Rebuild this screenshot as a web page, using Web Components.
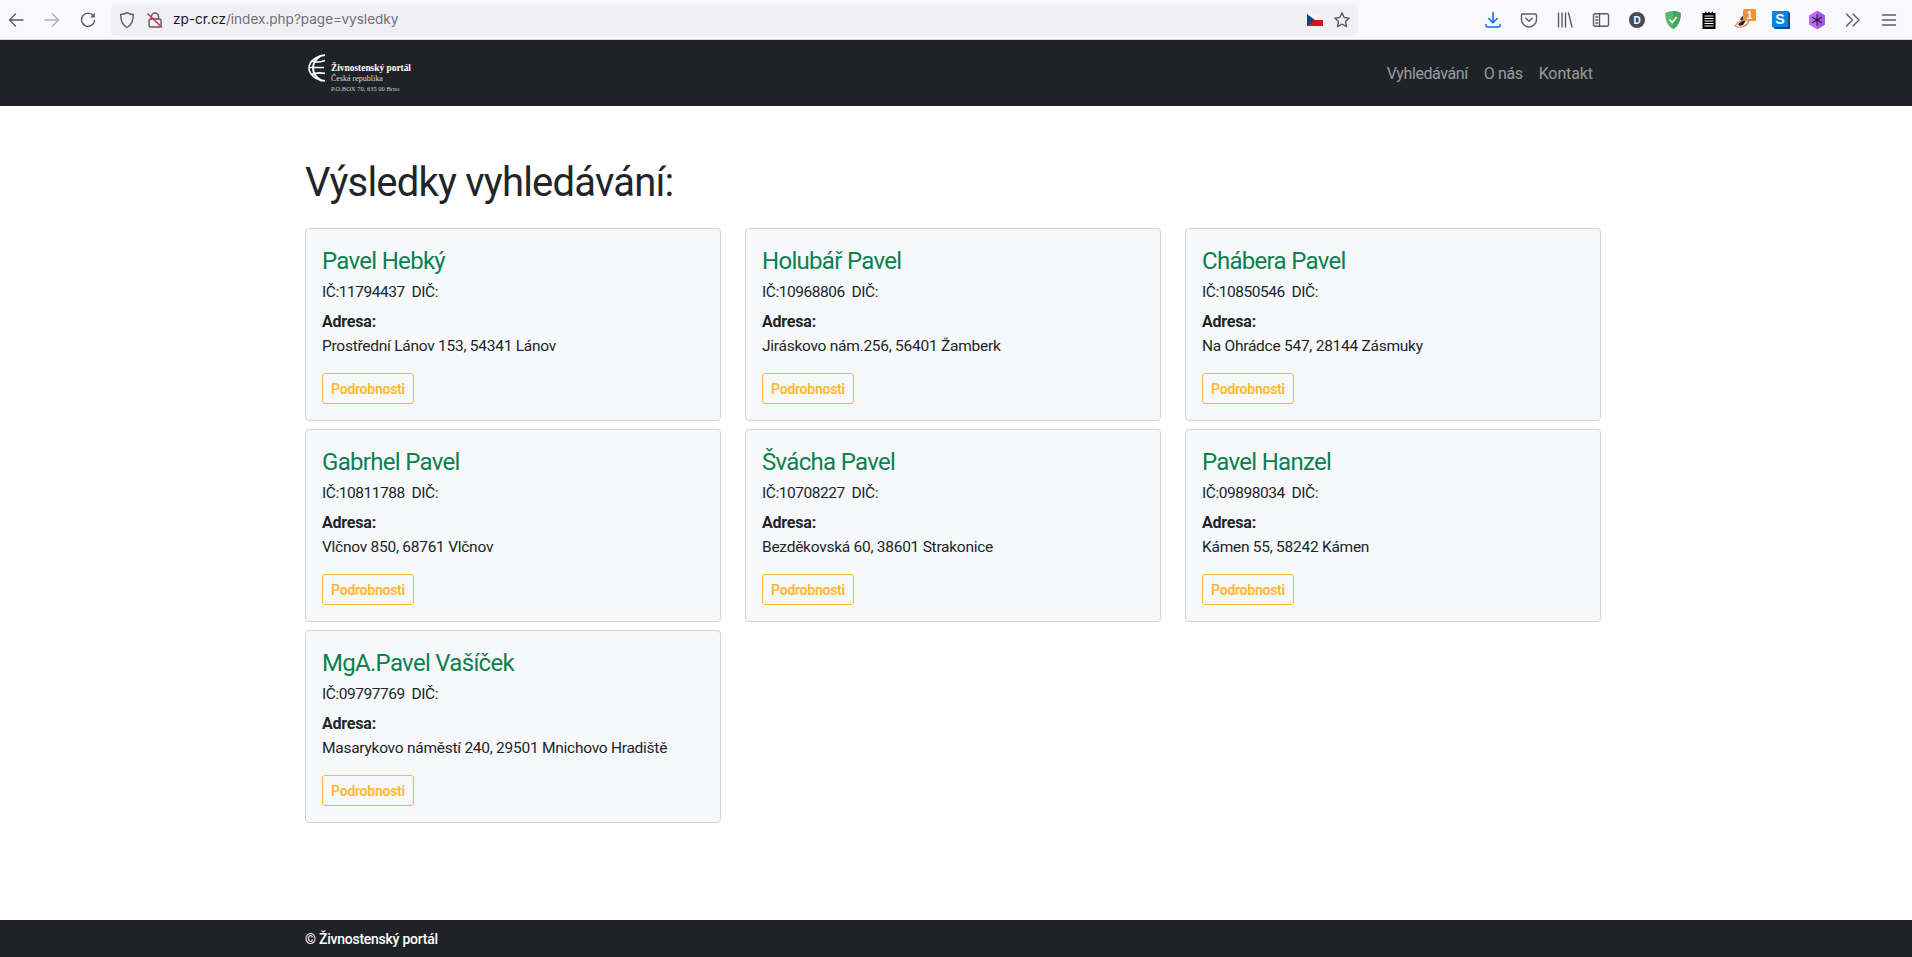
<!DOCTYPE html>
<html lang="cs"><head><meta charset="utf-8"><title>Živnostenský portál</title>
<style>
html,body{margin:0;padding:0;background:#fff}
body{font-family:Roboto,"Liberation Sans",sans-serif;color:#212529;font-size:16px;height:957px;overflow:hidden;display:flex;flex-direction:column}
results-page{flex:1}
</style></head><body>
<browser-bar></browser-bar>
<site-nav></site-nav>
<results-page>
<result-card name="Pavel Hebký" ic="11794437" addr="Prostřední Lánov 153, 54341 Lánov"></result-card>
<result-card name="Holubář Pavel" ic="10968806" addr="Jiráskovo nám.256, 56401 Žamberk"></result-card>
<result-card name="Chábera Pavel" ic="10850546" addr="Na Ohrádce 547, 28144 Zásmuky"></result-card>
<result-card name="Gabrhel Pavel" ic="10811788" addr="Vlčnov 850, 68761 Vlčnov"></result-card>
<result-card name="Švácha Pavel" ic="10708227" addr="Bezděkovská 60, 38601 Strakonice"></result-card>
<result-card name="Pavel Hanzel" ic="09898034" addr="Kámen 55, 58242 Kámen"></result-card>
<result-card name="MgA.Pavel Vašíček" ic="09797769" addr="Masarykovo náměstí 240, 29501 Mnichovo Hradiště"></result-card>
</results-page>
<site-footer></site-footer>
<script>
const S='fill="none" stroke="#5b5b66" stroke-width="1.4" stroke-linecap="round" stroke-linejoin="round"';
const svg=(w,h,b)=>`<svg width="${w}" height="${h}" viewBox="0 0 ${w} ${h}">${b}</svg>`;
const IC={
back:svg(18,18,`<path d="M16 9H2.5M8.500 3 2.500 9l6 6" ${S}/>`),
fwd:svg(18,18,`<path d="M2 9h13.500M9.500 3l6 6-6 6" ${S} opacity=".45"/>`),
reload:svg(18,18,`<path d="M14.600 5.200A6.600 6.600 0 1 0 15.600 9.500" ${S}/><path d="M15.800 1.800v4.600h-4.600z" fill="#5b5b66"/>`),
shield:svg(18,18,`<path d="M9 1.600c2 1.200 4 1.800 6.300 1.900 0 6.200-1.600 10.600-6.300 13-4.700-2.400-6.300-6.800-6.300-13C5 3.400 7 2.800 9 1.600z" ${S}/>`),
lock:svg(18,18,`<path d="M5.500 8V5.500a3.500 3.500 0 0 1 7 0V8" ${S}/><rect x="3" y="8" width="12" height="8" rx="1.500" ${S}/><path d="M1.500 2.500 16 16.500" stroke="#e22850" stroke-width="1.500" fill="none"/>`),
flag:svg(16,12,`<rect width="16" height="6" fill="#f4f4f6"/><rect y="6" width="16" height="6" fill="#d7141a"/><path d="M0 0 8 6 0 12z" fill="#11457e"/>`),
star:svg(18,18,`<path d="M9 1.800 11.200 6.500l5 .6-3.700 3.500 1 5L9 13.100l-4.500 2.500 1-5L1.800 7.100l5-.6z" ${S}/>`),
download:svg(18,18,`<path d="M9 1.500V11.500M4.800 7.500 9 11.700l4.200-4.200" fill="none" stroke="#0a6cf0" stroke-width="1.500" stroke-linecap="round" stroke-linejoin="round"/><path d="M2 13.500v1a1.500 1.500 0 0 0 1.500 1.500h11a1.500 1.500 0 0 0 1.500-1.500v-1" fill="none" stroke="#0a6cf0" stroke-width="1.500" stroke-linecap="round"/>`),
pocket:svg(18,18,`<path d="M2.500 3h13a1 1 0 0 1 1 1v4.500a7.500 7.500 0 0 1-15 0V4a1 1 0 0 1 1-1z" ${S}/><path d="M5.800 7.200 9 10.200l3.200-3" ${S}/>`),
library:svg(18,18,`<path d="M2.500 2v14M6 2v14M9.500 2v14M12.500 2l3.500 14" ${S}/>`),
sidebar:svg(18,18,`<rect x="1.500" y="2.800" width="15" height="12.400" rx="1.500" ${S}/><path d="M7.500 2.800v12.400M3.700 6h2M3.700 9h2M3.700 12h2" ${S}/>`),
d:svg(18,18,`<circle cx="9" cy="9" r="8" fill="#4a4a55"/><text x="9" y="12.600" text-anchor="middle" font-family="Liberation Sans" font-weight="700" font-size="10" fill="#fff">D</text>`),
guard:svg(18,20,`<path d="M9 1C6 1 3.500 1.800 1.200 3c0 7 2 13 7.800 16 5.800-3 7.800-9 7.800-16C14.500 1.800 12 1 9 1z" fill="#5cb76e"/><path d="M9 1c3 0 5.500.8 7.800 2 0 7-2 13-7.800 16z" fill="#46a35d"/><path d="M5.500 9.500 8.300 12.500l4.400-5.500" fill="none" stroke="#fff" stroke-width="1.600"/>`),
note:svg(16,18,`<path d="M1.500 2H4V.8h1.500V2h1.800V.8h1.500V2h1.800V.8H12V2h2.500v16h-13z" fill="#000"/><path d="M3.500 5h9M3.500 7.500h9M3.500 10h9M3.500 12.500h9M3.500 15h9" stroke="#fff" stroke-width="1"/>`),
bird:svg(24,24,`<path d="M2 18c2-3 6-6 11-6l3 1c-1 4-7 7-12 6z" fill="none" stroke="#e8894a" stroke-width="1.200"/><path d="M5 16.500c2-2.500 5-4 8-4l-3 4.500-3 .8z" fill="#222"/><path d="M8 12l4-5" stroke="#222" stroke-width="2.200"/><rect x="10" y="1" width="13" height="12" rx="1.500" fill="#f0903a"/><text x="16.500" y="11" text-anchor="middle" font-family="Liberation Sans" font-weight="700" font-size="10" fill="#fff">1</text>`),
s:svg(20,20,`<path d="M3 1h14l2 2v16H4l-2-2z" fill="#0d4f86"/><rect x="1" y="1" width="16" height="16" fill="#0a84e8"/><text x="9" y="14" text-anchor="middle" font-family="Liberation Sans" font-weight="700" font-size="14" fill="#fff">S</text>`),
snow:svg(20,20,`<path d="M10 .8 18 5.400v9.200L10 19.200 2 14.600V5.400z" fill="#c06af5"/><path d="M10 .8 18 5.400v9.200L10 19.200z" fill="#a455e8"/><path d="M10 4.500v11M5.200 7.200l9.600 5.600M14.800 7.200l-9.600 5.600" stroke="#2a1440" stroke-width="1.100"/>`),
more:svg(18,18,`<path d="M2.500 3l6 6-6 6M9 3l6 6-6 6" ${S}/>`),
menu:svg(18,18,`<path d="M2.500 4h13M2.500 9h13M2.500 14h13" ${S}/>`)
};
class BrowserBar extends HTMLElement{constructor(){super();const b=n=>`<span class="b">${IC[n]}</span>`;
this.attachShadow({mode:'open'}).innerHTML=`<style>
:host{display:flex;align-items:center;height:39px;background:#f9f9fb;border-bottom:1px solid #d4d4d8;box-sizing:content-box;flex:none}
.nav{display:flex;width:108px;margin-left:-2px;padding-right:2px;align-items:center}
.nav .b{width:36px}
.b{display:flex;width:36px;height:32px;align-items:center;justify-content:center;flex:none}
.url{width:1247px;height:32px;margin-left:3px;background:#f0f0f4;border-radius:5px;display:flex;align-items:center;box-sizing:border-box;padding:0 2px 0 2px}
.url .i{display:flex;width:28px;justify-content:center}
.t{font:13.55px/1 Inter,"Liberation Sans",sans-serif;color:#6e6e78;margin-left:4px;flex:1;white-space:nowrap}
.t b{font-weight:400;color:#15141a}
.flag{display:flex;margin-right:5px}
.tools{display:flex;margin-left:117px;align-items:center}
</style>
<div class="nav">${b('back')}${b('fwd')}${b('reload')}</div>
<div class="url"><span class="i">${IC.shield}</span><span class="i">${IC.lock}</span><span class="t"><b>zp-cr.cz</b>/index.php?page=vysledky</span><span class="flag">${IC.flag}</span><span class="i">${IC.star}</span></div>
<div class="tools">${['download','pocket','library','sidebar','d','guard','note','bird','s','snow','more','menu'].map(b).join('')}</div>`}}
customElements.define('browser-bar',BrowserBar);
class SiteNav extends HTMLElement{constructor(){super();this.attachShadow({mode:'open'}).innerHTML=`<style>
:host{display:block;background:#1f2327;height:66px;flex:none;padding-right:6px}
.c{width:1296px;margin:0 auto;height:100%;display:flex;align-items:center;justify-content:space-between}
.logo{display:flex;align-items:flex-start;gap:4px;margin-left:3px;height:100%;color:#fff;font-family:"Liberation Serif",serif}
.logo svg{margin-top:14px}
.tx{display:flex;flex-direction:column;margin-top:22px}
.tx span{display:block;white-space:nowrap}
.a{font-weight:700;font-size:9.400px;line-height:12px}.b2{font-size:8px;line-height:10px;color:#ddd}.c2{font-size:6.500px;line-height:9px;color:#ccc}
nav{display:flex;margin-top:2px}
a{color:rgba(255,255,255,.55);padding:0 8px;font-size:16px;line-height:24px;letter-spacing:-.4px;text-decoration:none;white-space:nowrap}
a:last-child{letter-spacing:-.1px}
</style><div class="c"><div class="logo">
<svg width="19" height="28" viewBox="0 0 19 26" preserveAspectRatio="none" fill="none" stroke="#fff"><path d="M17 1C8 2 1 7 1 13c0 6 7 11 16 12" stroke-width="1.600"/><path d="M13 1.500C7 5 5 9 5 13c0 4 3 9 9 12" stroke-width="2"/><path d="M3 6.500c4 1.500 8 1.500 14-.5M1 12.500h15M3 19c4-1.500 8-2 14-1" stroke-width="1.500"/></svg>
<div class="tx"><span class="a">Živnostenský portál</span><span class="b2">Česká republika</span><span class="c2">P.O.BOX 70, 635 00 Brno</span></div></div>
<nav><a>Vyhledávání</a><a>O nás</a><a>Kontakt</a></nav></div>`}}
customElements.define('site-nav',SiteNav);
class ResultsPage extends HTMLElement{constructor(){super();this.attachShadow({mode:'open'}).innerHTML=`<style>
:host{display:block;padding-right:6px}
.c{width:1296px;margin:0 auto;padding-top:53px}
h1{margin:0 0 21px;font-size:40px;line-height:48px;font-weight:400;color:#212529;letter-spacing:-.8px}
.g{display:grid;grid-template-columns:repeat(3,416px);column-gap:24px;row-gap:8px}
</style><div class="c"><h1>Výsledky vyhledávání:</h1><div class="g"><slot></slot></div></div>`}}
customElements.define('results-page',ResultsPage);
class ResultCard extends HTMLElement{constructor(){super();const g=k=>this.getAttribute(k);this.attachShadow({mode:'open'}).innerHTML=`<style>
:host{display:block;box-sizing:border-box;height:193px;background:#f7f8fa;border:1px solid #d4d5d7;border-radius:4px;padding:18px 16px 16px;font-size:15.5px;line-height:24px;color:#212529}
h4{margin:0 0 4px;font-size:24px;line-height:29px;font-weight:400;color:#0b8050;letter-spacing:-.7px}
p{margin:0;letter-spacing:-.26px;white-space:nowrap}
.ic{margin-bottom:6px;letter-spacing:-.45px}
b{font-weight:700;font-size:16px;letter-spacing:-.2px}
button{all:unset;display:block;box-sizing:border-box;width:92px;height:31px;margin-top:15px;border:1px solid #feb92c;border-radius:3px;color:#feb92c;text-align:center;font:600 14px/30px Roboto,sans-serif;letter-spacing:-.25px}
</style><h4>${g('name')}</h4><p class="ic">IČ:${g('ic')}&nbsp; DIČ:</p><p><b>Adresa:</b></p><p>${g('addr')}</p><button>Podrobnosti</button>`}}
customElements.define('result-card',ResultCard);
class SiteFooter extends HTMLElement{constructor(){super();this.attachShadow({mode:'open'}).innerHTML=`<style>
:host{display:block;background:#1f2327;height:37px;flex:none;padding-right:6px}
.c{width:1296px;margin:0 auto;line-height:39px;color:#fff;font-size:14px;font-weight:500;letter-spacing:-.25px}
</style><div class="c">© Živnostenský portál</div>`}}
customElements.define('site-footer',SiteFooter);
</script></body></html>
